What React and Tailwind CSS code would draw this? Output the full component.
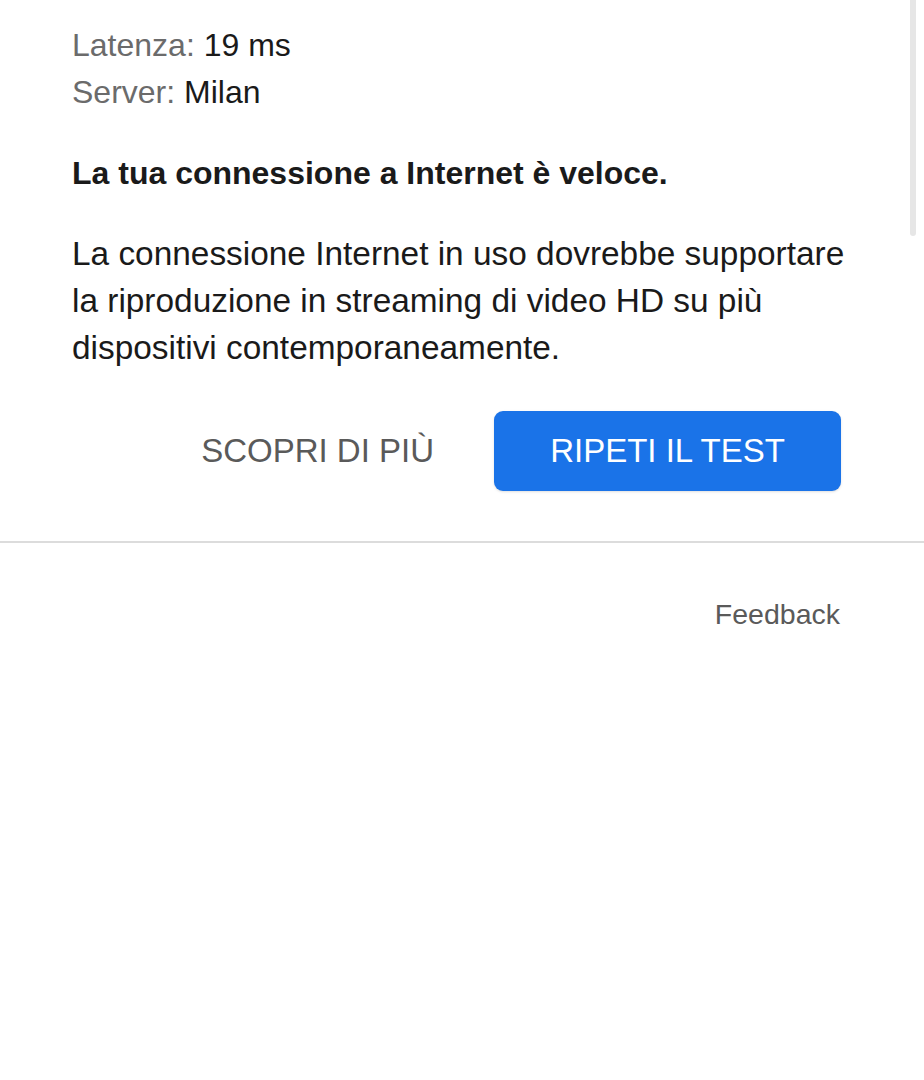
import React from 'react';

const App = () => {
    return (
        <div className="relative w-[924px] h-[1080px] bg-white overflow-hidden" style={{ fontFamily: '"Liberation Sans", Arial, sans-serif' }}>
            {/* Scrollbar thumb */}
            <div className="absolute right-[8px] top-0 w-[6px] h-[236px] rounded-b-full bg-[#e6e6e6]" />

            <div className="pl-[72px] pr-[78px] pt-[22px]">
                {/* Stats */}
                <div className="text-[32px] leading-[47px]">
                    <p><span className="text-[#6b6b6b]">Latenza:</span> <span className="text-[#1a1a1a]">19 ms</span></p>
                    <p><span className="text-[#6b6b6b]">Server:</span> <span className="text-[#1a1a1a]">Milan</span></p>
                </div>

                {/* Summary */}
                <h2 className="mt-[40px] text-[32px] leading-[34px] font-bold text-[#1a1a1a]">
                    La tua connessione a Internet è veloce.
                </h2>
                <p className="mt-[40px] text-[33.4px] leading-[47px] text-[#1a1a1a]">
                    La connessione Internet in uso dovrebbe supportare la riproduzione in streaming di video HD su più dispositivi contemporaneamente.
                </p>

                {/* Actions */}
                <div className="mt-[40px] pr-[5px] flex items-center justify-end gap-[60px]">
                    <button className="text-[33px] text-[#5a5a5a]">SCOPRI DI PIÙ</button>
                    <button className="w-[347px] h-[80px] rounded-[9px] bg-[#1a73e8] text-white text-[33px] shadow-sm">
                        RIPETI IL TEST
                    </button>
                </div>
            </div>

            <div className="mt-[50px] h-[2px] bg-[#dcdcdc]" />

            <div className="pr-[84px] pt-[55px] flex justify-end">
                <span className="text-[28.5px] leading-[32px] text-[#5a5a5a]">Feedback</span>
            </div>
        </div>
    );
};

export default App;
